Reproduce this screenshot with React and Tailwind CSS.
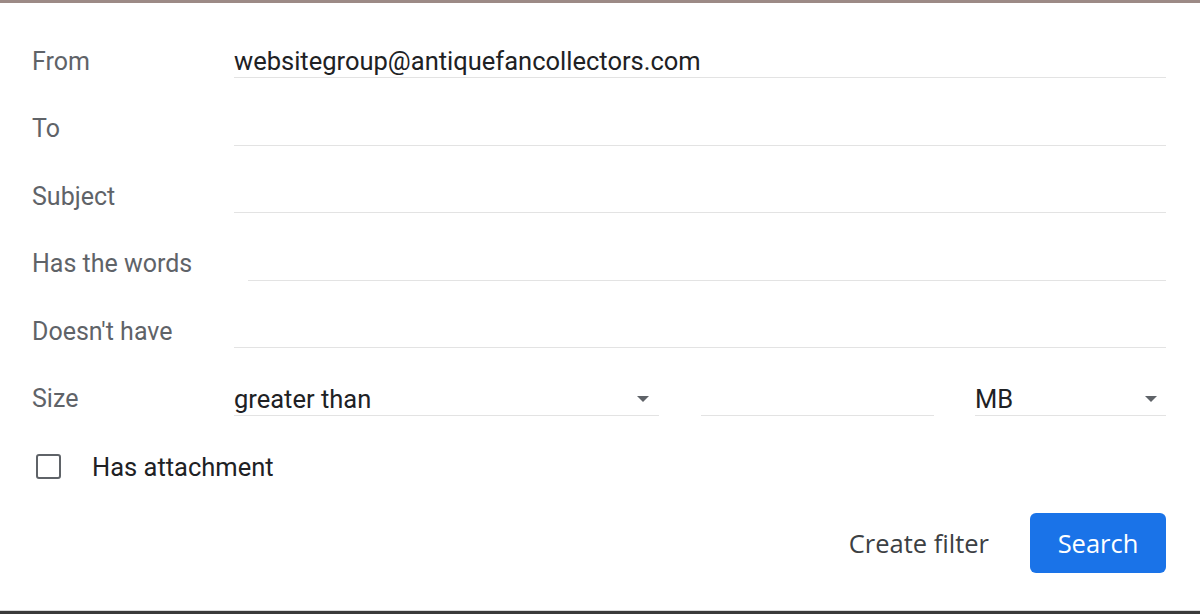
import React, { useState } from 'react';

const Field = ({ value = '', className = '' }) => (
  <div className={`h-[33px] flex items-center border-b border-[#e3e3e3] text-[#202124] text-[25.5px] ${className}`}>
    {value}
  </div>
);

const Arrow = () => (
  <span className="w-0 h-0 border-l-[6px] border-r-[6px] border-t-[6px] border-l-transparent border-r-transparent border-t-[#5f6368]" />
);

const Row = ({ label, children }) => (
  <div className="flex items-center h-[67.5px]">
    <div className="w-[202px] shrink-0 text-[#5f6368] text-[25px]">{label}</div>
    {children}
  </div>
);

const App = () => {
  const [checked, setChecked] = useState(false);

  return (
    <div className="w-[1200px] h-[614px] bg-white flex flex-col text-[24px] leading-[32px]" style={{ fontFamily: 'Roboto, Arial, sans-serif' }}>
      {/* top edge */}
      <div className="h-[3px] bg-[#9c8a86] shrink-0" />

      <div className="flex-1 flex flex-col pl-8 pr-[34px] pt-[25px]">
        <Row label="From">
          <Field value="websitegroup@antiquefancollectors.com" className="flex-1" />
        </Row>
        <Row label="To">
          <Field className="flex-1" />
        </Row>
        <Row label="Subject">
          <Field className="flex-1" />
        </Row>
        <Row label="Has the words">
          <Field className="flex-1 ml-[14px]" />
        </Row>
        <Row label="Doesn't have">
          <Field className="flex-1" />
        </Row>
        <Row label="Size">
          <div className="w-[425px] h-[33px] flex items-center justify-between border-b border-[#e3e3e3] text-[#202124] text-[25.5px] pr-[10px]">
            <span>greater than</span>
            <Arrow />
          </div>
          <div className="w-[233px] ml-[42px] h-[33px] border-b border-[#e3e3e3]" />
          <div className="flex-1 ml-[41px] h-[33px] flex items-center justify-between border-b border-[#e3e3e3] text-[#202124] text-[25.5px] pr-[9px]">
            <span>MB</span>
            <Arrow />
          </div>
        </Row>

        <div className="flex items-center h-[67.5px]">
          <button
            onClick={() => setChecked(!checked)}
            className="ml-[4px] w-[25px] h-[25px] rounded-[3px] border-[2.5px] border-[#5f6368] bg-white"
          />
          <span className="ml-[31px] text-[#202124] text-[25.5px]">Has attachment</span>
        </div>

        <div className="flex items-center justify-end mt-[12px]" style={{ fontFamily: '"Open Sans", Roboto, sans-serif' }}>
          <button className="text-[#3c4043] mr-[41px] px-0 text-[25.5px]">Create filter</button>
          <button className="w-[136px] h-[60px] rounded-[6px] bg-[#1a73e8] text-white text-[25.5px]">Search</button>
        </div>
      </div>

      {/* bottom edge */}
      <div className="h-[1px] bg-[#d9d9d9] shrink-0" />
      <div className="h-[3px] bg-[#3a3a3a] shrink-0" />
    </div>
  );
};

export default App;
